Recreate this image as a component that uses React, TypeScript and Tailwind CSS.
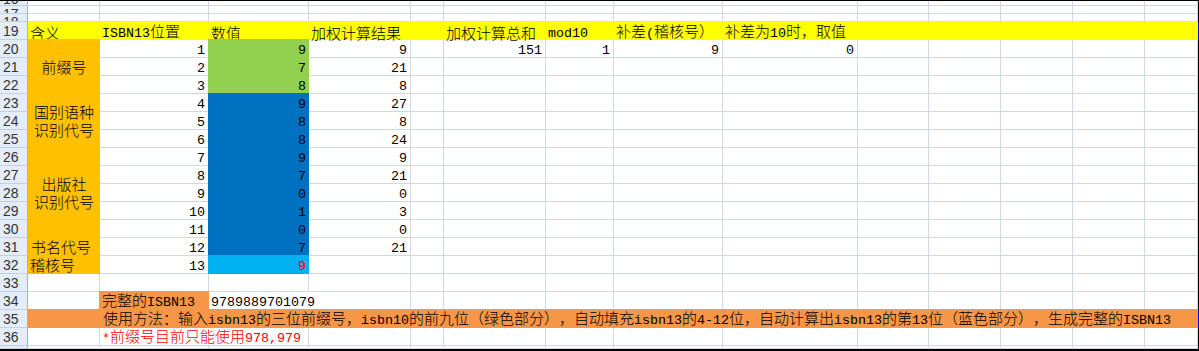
import React from "react";

function T({ s }: { s: string }) {
  const parts = s.match(/[\x20-\x7e]+|[^\x20-\x7e]+/g) ?? [];
  return (
    <span className="whitespace-nowrap [text-spacing-trim:space-all]">
      {parts.map((p, i) =>
        /^[\x20-\x7e]/.test(p) ? (
          <span key={i} className="font-['Liberation_Mono',monospace] text-[13.33px] font-normal">
            {p}
          </span>
        ) : (
          <span key={i}>{p}</span>
        )
      )}
    </span>
  );
}

function RH({ n, align = "items-center", lead = "leading-[16px]" }: { n: number; align?: string; lead?: string }) {
  return (
    <div
      className={`flex ${align} ${lead} overflow-hidden bg-[#E4ECF7] border-r border-b border-r-[#9EB6CE] border-b-[#C4D0E0] pl-[3px] font-['Liberation_Sans',Arial,sans-serif] font-normal text-[14px] text-[#333]`}
    >
      {n}
    </div>
  );
}

function E() {
  return <div className="border-r border-b border-[#D0D7E5]" />;
}

function Empties({ n }: { n: number }) {
  return (
    <>
      {Array.from({ length: n }).map((_, i) => (
        <E key={i} />
      ))}
    </>
  );
}

function Num({ v }: { v: string | number }) {
  return (
    <div className="flex items-center justify-end pr-[3px] border-r border-b border-[#D0D7E5] leading-[17px]">
      <T s={String(v)} />
    </div>
  );
}

function Edge({ blue = false }: { blue?: boolean }) {
  return <div className={blue ? "bg-[#0000FF]" : "bg-black"} />;
}

const rows = [
  { pos: 1, val: 9, w: 9, fill: "bg-[#92D050]" },
  { pos: 2, val: 7, w: 21, fill: "bg-[#92D050]" },
  { pos: 3, val: 8, w: 8, fill: "bg-[#92D050]" },
  { pos: 4, val: 9, w: 27, fill: "bg-[#0070C0]" },
  { pos: 5, val: 8, w: 8, fill: "bg-[#0070C0]" },
  { pos: 6, val: 8, w: 24, fill: "bg-[#0070C0]" },
  { pos: 7, val: 9, w: 9, fill: "bg-[#0070C0]" },
  { pos: 8, val: 7, w: 21, fill: "bg-[#0070C0]" },
  { pos: 9, val: 0, w: 0, fill: "bg-[#0070C0]" },
  { pos: 10, val: 1, w: 3, fill: "bg-[#0070C0]" },
  { pos: 11, val: 0, w: 0, fill: "bg-[#0070C0]" },
  { pos: 12, val: 7, w: 21, fill: "bg-[#0070C0]" },
  { pos: 13, val: 9, w: "", fill: "bg-[#00B0F0] text-[#FF0000]" },
];

function ACell({ i }: { i: number }) {
  const base = "-mt-px bg-[#FFC000] flex leading-[18px]";
  if (i === 0)
    return (
      <div className={`${base} row-span-3 items-center justify-center`}>
        <span>前缀号</span>
      </div>
    );
  if (i === 3)
    return (
      <div className={`${base} row-span-3 flex-col items-center justify-center`}>
        <span>国别语种</span>
        <span>识别代号</span>
      </div>
    );
  if (i === 6)
    return (
      <div className={`${base} row-span-5 flex-col items-center justify-center`}>
        <span>出版社</span>
        <span>识别代号</span>
      </div>
    );
  if (i === 11)
    return (
      <div className={`${base} items-center pl-[3px]`}>
        <span>书名代号</span>
      </div>
    );
  if (i === 12)
    return (
      <div className={`${base} items-center pl-[2px]`}>
        <span>稽核号</span>
      </div>
    );
  return null;
}

const headers = [
  "含义",
  "ISBN13位置",
  "数值",
  "加权计算结果",
  "",
  "加权计算总和",
  "mod10",
  "补差(稽核号）",
  "补差为10时，取值",
];

export default function App() {
  return (
    <div className="w-[1199px] h-[351px] overflow-hidden bg-white border-t border-b-2 border-black font-['Noto_Sans_CJK_SC',sans-serif] font-light text-[15px] text-black">
      <div className="grid grid-cols-[28px_72px_109px_100px_102px_33px_102px_68px_109px_135px_71px_72px_72px_72px_53px_1px] grid-rows-[5px_8px_8px_repeat(18,18px)_3px] h-full">
        {/* rows 16-18 */}
        <RH n={16} align="items-end" lead="leading-[11px]" />
        <Empties n={14} />
        <Edge />
        <RH n={17} align="items-start" />
        <Empties n={14} />
        <Edge />
        <RH n={18} align="items-start" />
        <Empties n={14} />
        <Edge />

        {/* row 19 */}
        <RH n={19} />
        <div className="col-span-14 -mt-px bg-[#FFFF00] grid grid-cols-subgrid">
          {headers.map((h, i) => (
            <div key={i} className="flex items-center pl-[2px] leading-[17px] pt-px">
              <T s={h} />
            </div>
          ))}
        </div>
        <Edge blue />

        {/* rows 20-32 */}
        {rows.map((r, i) => (
          <React.Fragment key={i}>
            <RH n={20 + i} />
            <ACell i={i} />
            <Num v={r.pos} />
            <div className={`-ml-px -mt-px flex items-center justify-end pr-[3px] leading-[17px] ${r.fill}`}>
              <T s={String(r.val)} />
            </div>
            <Num v={r.w} />
            <E />
            {i === 0 ? (
              <>
                <Num v={151} />
                <Num v={1} />
                <Num v={9} />
                <Num v={0} />
              </>
            ) : (
              <Empties n={4} />
            )}
            <Empties n={5} />
            <Edge />
          </React.Fragment>
        ))}

        {/* row 33 */}
        <RH n={33} />
        <Empties n={14} />
        <Edge />

        {/* row 34 */}
        <RH n={34} />
        <E />
        <div className="-ml-px -mt-px bg-[#F79646] flex items-center pl-[3px] leading-[17px]">
          <T s="完整的ISBN13" />
        </div>
        <div className="col-span-2 flex items-center pl-[2px] border-r border-b border-[#D0D7E5] leading-[17px]">
          <T s="9789889701079" />
        </div>
        <Empties n={10} />
        <Edge />

        {/* row 35 */}
        <RH n={35} />
        <div className="col-span-14 -mt-px bg-[#F79646] grid grid-cols-subgrid">
          <div className="col-start-2 col-span-13 flex items-center pl-[3px] leading-[17px]">
            <T s="使用方法：输入isbn13的三位前缀号，isbn10的前九位（绿色部分），自动填充isbn13的4-12位，自动计算出isbn13的第13位（蓝色部分），生成完整的ISBN13" />
          </div>
        </div>
        <Edge blue />

        {/* row 36 */}
        <RH n={36} />
        <E />
        <div className="col-span-2 flex items-center pl-[2px] border-r border-b border-[#D0D7E5] text-[#FF0000] leading-[17px]">
          <T s="*前缀号目前只能使用978,979" />
        </div>
        <Empties n={11} />
        <Edge />

        {/* row 37 */}
        <RH n={37} align="items-start" />
        <Empties n={14} />
        <Edge />
      </div>
    </div>
  );
}
